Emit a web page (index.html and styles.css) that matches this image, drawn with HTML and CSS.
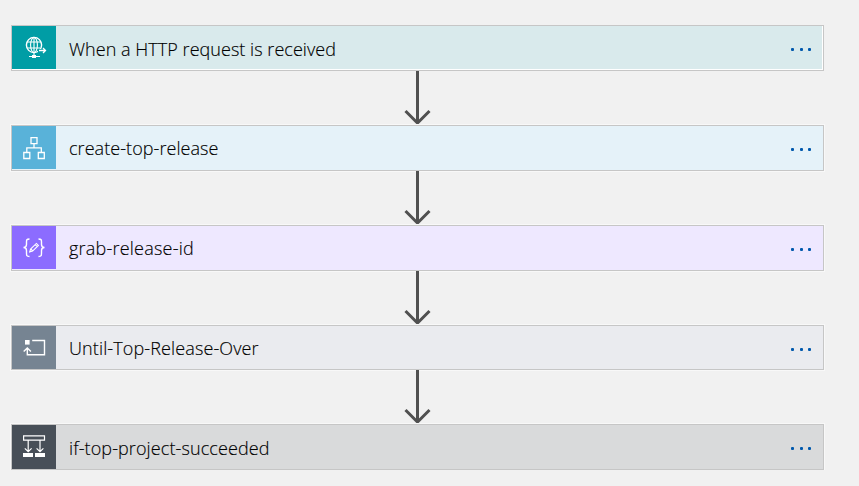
FILE: index.html
```html
<!DOCTYPE html>
<html lang="en">
<head>
<meta charset="utf-8">
<title>Workflow</title>
<link rel="stylesheet" href="styles.css">
</head>
<body>
<main class="flow">
  <section class="card request">
    <div class="tile"><svg viewBox="0 0 44 44" fill="none" stroke="#fff" stroke-width="1.1"><circle cx="22" cy="19" r="7.6" stroke-width="1.4"/><ellipse cx="22" cy="19" rx="3.4" ry="7.6"/><path d="M22 11v19M15 16h14M15 22h13M17 30.5h11"/><path d="M20 30.5h4" stroke-width="3"/><path d="M26 24.5h7M30.8 22l2.7 2.5-2.7 2.5" stroke="#009da5" stroke-width="3"/><path d="M27 24.5h6.5M31 22l2.5 2.5-2.5 2.5" stroke-width="1.3"/></svg></div>
    <span class="title t1">When a HTTP request is received</span>
    <div class="more"><i></i><i></i><i></i></div>
  </section>
  <div class="arrow"><svg viewBox="0 0 28 54"><path d="M14.5 0v52M2.500 40l12 12 12-12"/></svg></div>
  <section class="card create">
    <div class="tile"><svg viewBox="0 0 44 44" fill="none" stroke="#fff" stroke-width="1.3"><path d="M19 11.6h6v6h-6zM11.8 26.5h6v6h-6zM26.3 26.5h6v6h-6zM22 17.6v4M14.8 26.5v-4.7h14.500v4.700"/></svg></div>
    <span class="title t2">create-top-release</span>
    <div class="more"><i></i><i></i><i></i></div>
  </section>
  <div class="arrow"><svg viewBox="0 0 28 54"><path d="M14.5 0v52M2.500 40l12 12 12-12"/></svg></div>
  <section class="card grab">
    <div class="tile"><svg viewBox="0 0 44 44" fill="none" stroke="#fff" stroke-width="1.4"><path d="M17.5 13c-3 0-3 1-3 3v2.500c0 2-1 3-3 3 2 0 3 1 3 3V27c0 2.500 0 3.500 3 3.500M26.500 13c3 0 3 1 3 3v2.500c0 2 1 3 3 3-2 0-3 1-3 3V27c0 2.500 0 3.500-3 3.500"/><path stroke-width="1.1" d="M17.700 26l.9-2.900 5.800-5.700 2 2-5.800 5.700zM19 23.200l1.800 1.800M23.200 18.600l2 2"/></svg></div>
    <span class="title t3">grab-release-id</span>
    <div class="more"><i></i><i></i><i></i></div>
  </section>
  <div class="arrow"><svg viewBox="0 0 28 54"><path d="M14.5 0v52M2.500 40l12 12 12-12"/></svg></div>
  <section class="card until">
    <div class="tile"><svg viewBox="0 0 44 44" fill="none" stroke="#fff" stroke-width="1.4"><path d="M13 14h4.600v4.600H13z" fill="#fff" stroke="none"/><path d="M20.200 14.500h12.300v14.200H15.300V22.500M11.700 25.500l3.600-3.500 3.600 3.500"/></svg></div>
    <span class="title t4">Until-Top-Release-Over</span>
    <div class="more"><i></i><i></i><i></i></div>
  </section>
  <div class="arrow"><svg viewBox="0 0 28 54"><path d="M14.5 0v52M2.500 40l12 12 12-12"/></svg></div>
  <section class="card condition">
    <div class="tile"><svg viewBox="0 0 44 44" fill="none" stroke="#fff" stroke-width="1.2"><path d="M11.600 10.900h20.900v4.200H11.600z"/><path d="M16.200 15v11.500M28 15v11.500M12.800 23.400l3.400 3.300 3.400-3.300M24.600 23.400l3.400 3.300 3.400-3.300"/><path d="M11 28h10v4H11zM23 28h10v4H23z" fill="#fff" stroke="none"/></svg></div>
    <span class="title t5">if-top-project-succeeded</span>
    <div class="more"><i></i><i></i><i></i></div>
  </section>
</main>
</body>
</html>
```
FILE: styles.css
```css
* { box-sizing: border-box; }
body { margin: 0; background: #f1f1f1; font-family: "Open Sans", "Noto Sans", sans-serif; }
.flow { width: 813px; margin: 25px 0 0 11px; display: flex; flex-direction: column; }
.card { height: 46px; display: flex; align-items: flex-start; border: 1px solid #c6c6c6; box-shadow: 0 0 0 1px #f8f8f8; }
.tile { width: 44px; height: 43px; flex: none; }
.tile svg { display: block; width: 44px; height: 44px; }
.title { margin: 10px 0 0 13px; font-size: 18px; font-weight: 300; line-height: 24px; color: #000; white-space: nowrap; -webkit-text-stroke: 0.15px #000; }
.t1 { margin-top: 11px; letter-spacing: 0.04px; }
.t2 { letter-spacing: 0.06px; }
.t3 { letter-spacing: 0.22px; }
.t4 { letter-spacing: 0.12px; }
.t5 { margin-top: 11px; letter-spacing: 0.1px; }
.more { margin: 21.5px 12px 0 auto; display: flex; gap: 5.5px; }
.more i { width: 3px; height: 3px; border-radius: 1px; background: #0058ad; }
.request { background: #d9eaec; box-shadow: inset -1px -1px #fff; }
.request .tile { background: #009da5; }
.create { background: #e5f2f9; }
.create .tile { background: #59b2d9; }
.grab { background: #eee8ff; }
.grab .tile { background: #8c6cff; }
.until { height: 45px; background: #eaebef; }
.until .tile { background: #768492; }
.condition { background: #d9dadb; }
.condition .tile { height: 44px; background: #484f58; }
.arrow { height: 54px; display: flex; padding-left: 392px; }
.arrow svg { width: 28px; height: 54px; }
.arrow path { fill: none; stroke: #505050; stroke-width: 3; }
```
